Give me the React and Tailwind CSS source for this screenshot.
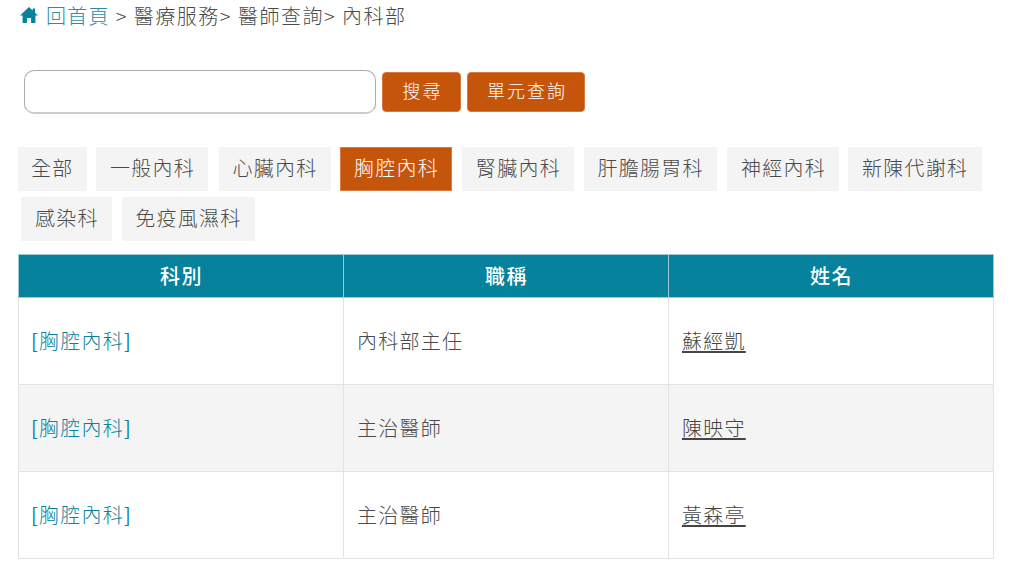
import React from 'react';

const row1 = [
  { label: '全部', cls: 'pl-[13px] pr-[13.5px]' },
  { label: '一般內科', cls: 'ml-[9px] pl-[14px] pr-[13px]' },
  { label: '心臟內科', cls: 'ml-[11px] px-[13.5px]' },
  { label: '胸腔內科', cls: 'ml-[9px] pl-[14px] pr-[13px]' },
  { label: '腎臟內科', cls: 'ml-[10px] pl-[14px] pr-[13px]' },
  { label: '肝膽腸胃科', cls: 'ml-[10px] px-[13.4px]' },
  { label: '神經內科', cls: 'ml-[10px] pl-[14px] pr-[13px]' },
  { label: '新陳代謝科', cls: 'ml-[9px] pl-[14px] pr-[13.7px]' },
];
const row2 = [
  { label: '感染科', cls: 'pl-[14px] pr-[13.2px]' },
  { label: '免疫風濕科', cls: 'ml-[10px] px-[13.4px]' },
];
const doctors = [
  { title: '內科部主任', name: '蘇經凱' },
  { title: '主治醫師', name: '陳映守' },
  { title: '主治醫師', name: '黃森亭' },
];

const tabClass = (active) =>
  active
    ? 'block h-[44px] leading-[42px] whitespace-nowrap bg-[#c6550c] text-white shadow-[inset_0_0_0_1px_#d67a42]'
    : 'block h-[44px] leading-[42px] whitespace-nowrap bg-[#f4f4f4] text-[#4a4a4a]';

const Tab = ({ label, cls }) => <a className={tabClass(label === '胸腔內科') + ' ' + cls}>{label}</a>;

export default function App() {
  return (
    <div className="w-[1024px] h-[570px] overflow-hidden bg-white text-[20px] tracking-[1.25px] text-[#4a4a4a] font-light font-['Noto_Sans_CJK_TC','Noto_Sans',sans-serif]">
      <div className="flex items-center h-[32px] pl-[20px] tracking-[1.5px]">
        <svg viewBox="0 0 18 16" className="w-[18px] h-[16px] mr-[8px] -mt-[2px] fill-[#06829c]">
          <path d="M9 0 0 8.500h2.600V16h4.300v-5h4.200v5h4.300V8.500H18l-3-2.800V1.500h-2.300v2z" />
        </svg>
        <a className="text-[#2b8ca3] tracking-[1.25px]">回首頁</a>
        <span className="ml-[6px] whitespace-pre">{'> 醫療服務> 醫師查詢> 內科部'}</span>
      </div>

      <div className="flex items-center gap-[6px] mt-[38px] ml-[24px]">
        <input className="w-[352px] h-[44px] rounded-[10px] border border-[#aaa] border-b-2 border-b-[#ccc] outline-none" />
        <button className="h-[40px] w-[79px] pb-[3px] pl-[2px] rounded-[4px] bg-[#c6550c] text-white text-[18px] font-light tracking-[2px] border border-[#d67a42]">搜尋</button>
        <button className="h-[40px] w-[118px] pb-[3px] pl-[2px] rounded-[4px] bg-[#c6550c] text-white text-[18px] font-light tracking-[2px] border border-[#d67a42]">單元查詢</button>
      </div>

      <div className="flex mt-[33px] ml-[18px]">
        {row1.map((t) => (
          <Tab key={t.label} label={t.label} cls={t.cls} />
        ))}
      </div>
      <div className="flex mt-[6px] ml-[21px]">
        {row2.map((t) => (
          <Tab key={t.label} label={t.label} cls={t.cls} />
        ))}
      </div>

      <table className="mt-[13px] ml-[18px] w-[976px] table-fixed border-collapse">
        <thead>
          <tr className="h-[43px] bg-[#06829c] text-white">
            <th className="border border-[#9cc8d3] font-medium tracking-[1.5px] pl-[1px] pb-[1px]">科別</th>
            <th className="border border-[#9cc8d3] font-medium tracking-[1.5px] pl-[1px] pb-[1px]">職稱</th>
            <th className="border border-[#9cc8d3] font-medium tracking-[1.5px] pl-[1px] pb-[1px]">姓名</th>
          </tr>
        </thead>
        <tbody>
          {doctors.map((d, i) => (
            <tr key={d.name} className={i === 1 ? 'h-[87px] bg-[#f4f4f4]' : 'h-[87px]'}>
              <td className="border border-[#e2e2e2] pl-[12px] text-[#06829c]">
                <span className="font-normal">[</span>
                <a>胸腔內科</a>
                <span className="font-normal">]</span>
              </td>
              <td className="border border-[#e2e2e2] pl-[13px]">{d.title}</td>
              <td className="border border-[#e2e2e2] pl-[13px]">
                <a className="underline underline-offset-[2px] text-[#444]">{d.name}</a>
              </td>
            </tr>
          ))}
        </tbody>
      </table>
    </div>
  );
}
